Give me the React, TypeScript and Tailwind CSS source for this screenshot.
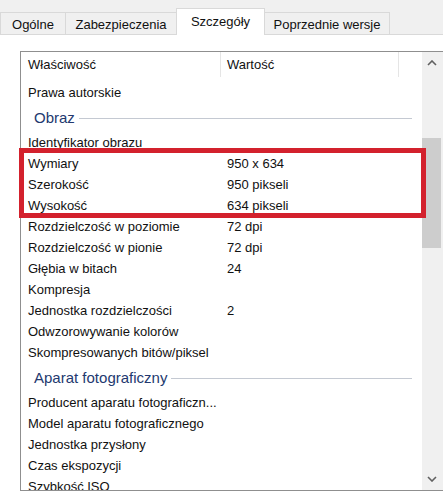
import React from "react";

type Row =
  | { kind: "row"; name: string; value?: string }
  | { kind: "group"; title: string };

const rows: Row[] = [
  { kind: "row", name: "Prawa autorskie" },
  { kind: "group", title: "Obraz" },
  { kind: "row", name: "Identyfikator obrazu" },
  { kind: "row", name: "Wymiary", value: "950 x 634" },
  { kind: "row", name: "Szerokość", value: "950 pikseli" },
  { kind: "row", name: "Wysokość", value: "634 pikseli" },
  { kind: "row", name: "Rozdzielczość w poziomie", value: "72 dpi" },
  { kind: "row", name: "Rozdzielczość w pionie", value: "72 dpi" },
  { kind: "row", name: "Głębia w bitach", value: "24" },
  { kind: "row", name: "Kompresja" },
  { kind: "row", name: "Jednostka rozdzielczości", value: "2" },
  { kind: "row", name: "Odwzorowywanie kolorów" },
  { kind: "row", name: "Skompresowanych bitów/piksel" },
  { kind: "group", title: "Aparat fotograficzny" },
  { kind: "row", name: "Producent aparatu fotograficzn..." },
  { kind: "row", name: "Model aparatu fotograficznego" },
  { kind: "row", name: "Jednostka przysłony" },
  { kind: "row", name: "Czas ekspozycji" },
  { kind: "row", name: "Szybkość ISO" },
];

function Chevron({ up }: { up?: boolean }) {
  return (
    <svg width="10" height="6" viewBox="0 0 10 6" className="text-[#606060]">
      <polyline
        points={up ? "1,5 5,1 9,5" : "1,1 5,5 9,1"}
        fill="none"
        stroke="currentColor"
        strokeWidth="1.6"
      />
    </svg>
  );
}

export default function App() {
  return (
    <div
      className="relative w-[443px] h-[496px] overflow-hidden bg-white text-[13px] text-[#111]"
      style={{ fontFamily: '"Liberation Sans", Arial, sans-serif' }}
    >
      {/* tab strip */}
      <div className="flex items-end h-[35px] bg-[#f0f0f0]">
        <div className="w-[66px] h-[23px] shrink-0 border border-[#d9d9d9] flex items-center justify-center pt-[2px]">
          Ogólne
        </div>
        <div className="w-[112px] h-[23px] shrink-0 -ml-px border border-[#d9d9d9] flex items-center justify-center pt-[2px]">
          Zabezpieczenia
        </div>
        <div className="w-[89px] h-[27px] shrink-0 -ml-px border border-b-0 border-[#d9d9d9] bg-white flex items-center justify-center pb-[1px]">
          Szczegóły
        </div>
        <div className="w-[126px] h-[23px] shrink-0 -ml-px border border-[#d9d9d9] flex items-center justify-center pt-[2px]">
          Poprzednie wersje
        </div>
        <div className="flex-1 h-px bg-[#d9d9d9]" />
      </div>

      {/* property list */}
      <div className="ml-[20px] mt-[16px] w-[424px] h-[440px] border border-[#8f8f8f] flex">
        <div className="w-[401px] flex flex-col">
          <div className="h-[25px] flex items-stretch shrink-0">
            <div className="w-[199px] pl-[7px] flex items-center">Właściwość</div>
            <div className="w-px bg-[#e5e5e5]" />
            <div className="w-[177px] pl-[6px] flex items-center">Wartość</div>
            <div className="w-px bg-[#e5e5e5]" />
          </div>
          <div className="flex-1 overflow-hidden">
            <div className="h-[5px]" />
            {rows.map((r, i) =>
              r.kind === "group" ? (
                <div key={i} className="h-[29px] flex items-center pl-[13px] pr-[10px]">
                  <span className="text-[15px] text-[#23396f] leading-none">{r.title}</span>
                  <div className="flex-1 h-px bg-[#c4c9d2] ml-[4px] mt-[2px]" />
                </div>
              ) : (
                <div key={i} className="h-[21px] flex items-center whitespace-nowrap">
                  <div className="w-[200px] pl-[7px]">{r.name}</div>
                  <div className="pl-[6px]">{r.value}</div>
                </div>
              )
            )}
          </div>
        </div>
        <div className="w-[21px] bg-[#f0f0f0] flex flex-col">
          <div className="h-[22px] flex items-center justify-center pr-[2px]">
            <Chevron up />
          </div>
          <div className="flex-1">
            <div className="mt-[64px] w-[19px] h-[110px] bg-[#cdcdcd]" />
          </div>
          <div className="h-[22px] flex items-center justify-center pr-[2px]">
            <Chevron />
          </div>
        </div>
      </div>

      {/* highlight */}
      <div className="absolute left-[19px] top-[148px] w-[407px] h-[70px] border-[5px] border-[#d3212d]" />
    </div>
  );
}
